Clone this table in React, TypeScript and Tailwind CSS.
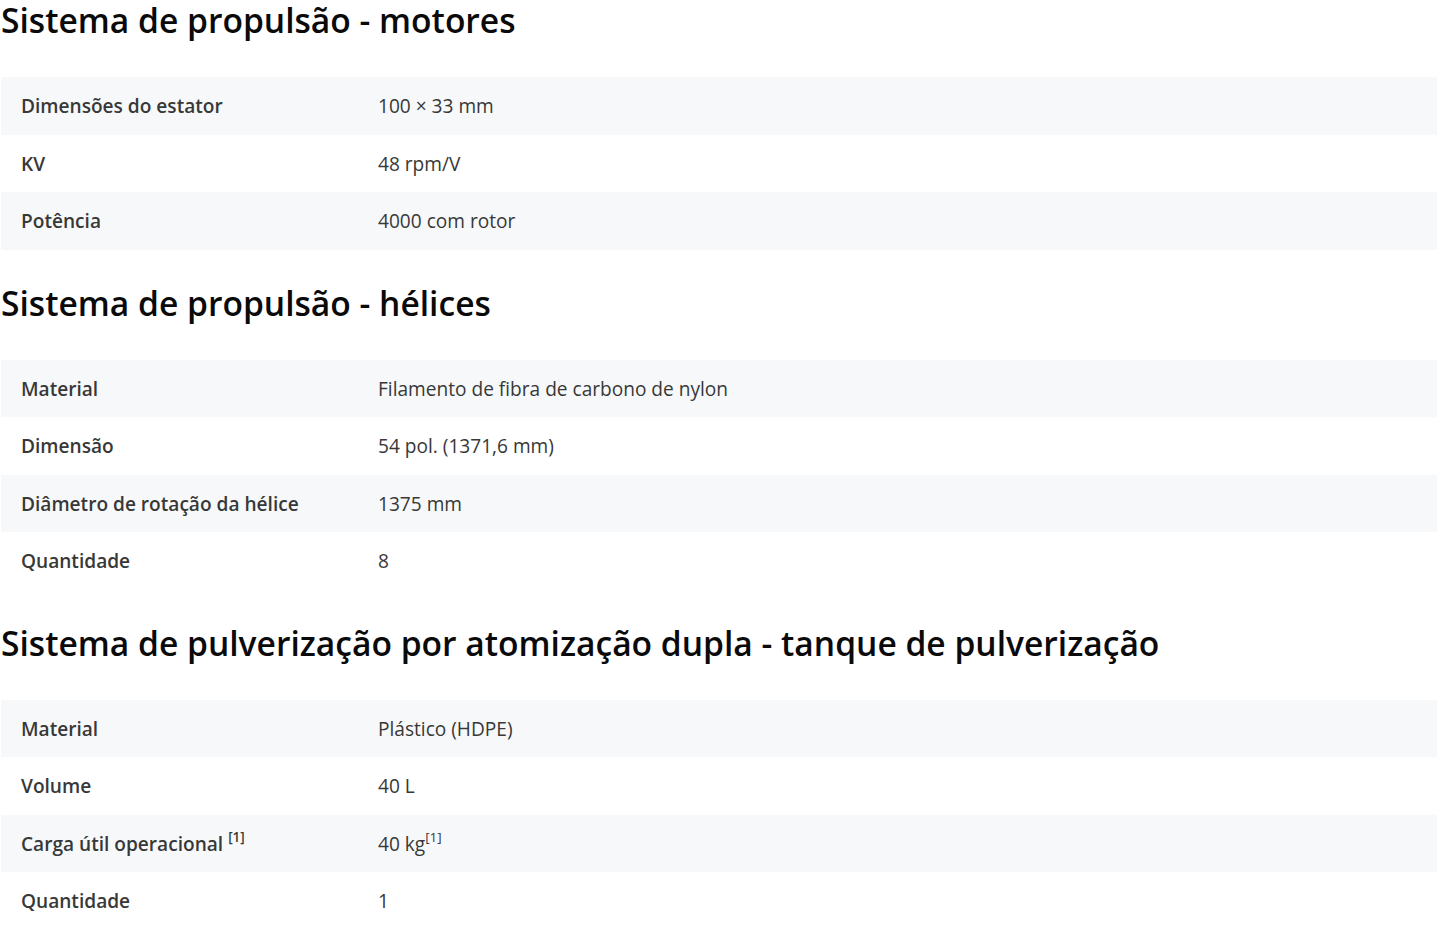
import type { ReactNode } from 'react';

interface SpecRow {
  label: ReactNode;
  value: ReactNode;
}

interface SpecSection {
  title: string;
  rows: SpecRow[];
}

const Sup = () => <sup className="text-[13.5px] relative -top-[2px] align-super leading-none">[1]</sup>;

const sections: SpecSection[] = [
  {
    title: 'Sistema de propulsão - motores',
    rows: [
      { label: 'Dimensões do estator', value: '100 × 33 mm' },
      { label: 'KV', value: '48 rpm/V' },
      { label: 'Potência', value: '4000 com rotor' },
    ],
  },
  {
    title: 'Sistema de propulsão - hélices',
    rows: [
      { label: 'Material', value: 'Filamento de fibra de carbono de nylon' },
      { label: 'Dimensão', value: '54 pol. (1371,6 mm)' },
      { label: 'Diâmetro de rotação da hélice', value: '1375 mm' },
      { label: 'Quantidade', value: '8' },
    ],
  },
  {
    title: 'Sistema de pulverização por atomização dupla - tanque de pulverização',
    rows: [
      { label: 'Material', value: 'Plástico (HDPE)' },
      { label: 'Volume', value: '40 L' },
      {
        label: (
          <>
            Carga útil operacional <Sup />
          </>
        ),
        value: (
          <>
            40 kg<Sup />
          </>
        ),
      },
      { label: 'Quantidade', value: '1' },
    ],
  },
];

export default function App() {
  return (
    <div className="min-h-screen bg-white text-[#333] font-['Open_Sans',sans-serif] pl-[1px] pr-[3px]">
      {sections.map((section, i) => (
        <section key={section.title} className={i === 0 ? '' : 'mt-[33px]'}>
          <h2 className="text-[33.6px] leading-[40px] font-semibold text-[#0a0a0a] mb-[37px]">
            {section.title}
          </h2>
          <div>
            {section.rows.map((row, j) => (
              <div
                key={j}
                className={`flex items-center h-[57.5px] pt-[2px] text-[19.1px] ${j % 2 === 0 ? 'bg-[#f7f8fa]' : 'bg-white'}`}
              >
                <div className="w-[377px] shrink-0 pl-5 font-semibold text-[#383838]">{row.label}</div>
                <div className="text-[#383838]">{row.value}</div>
              </div>
            ))}
          </div>
        </section>
      ))}
    </div>
  );
}
